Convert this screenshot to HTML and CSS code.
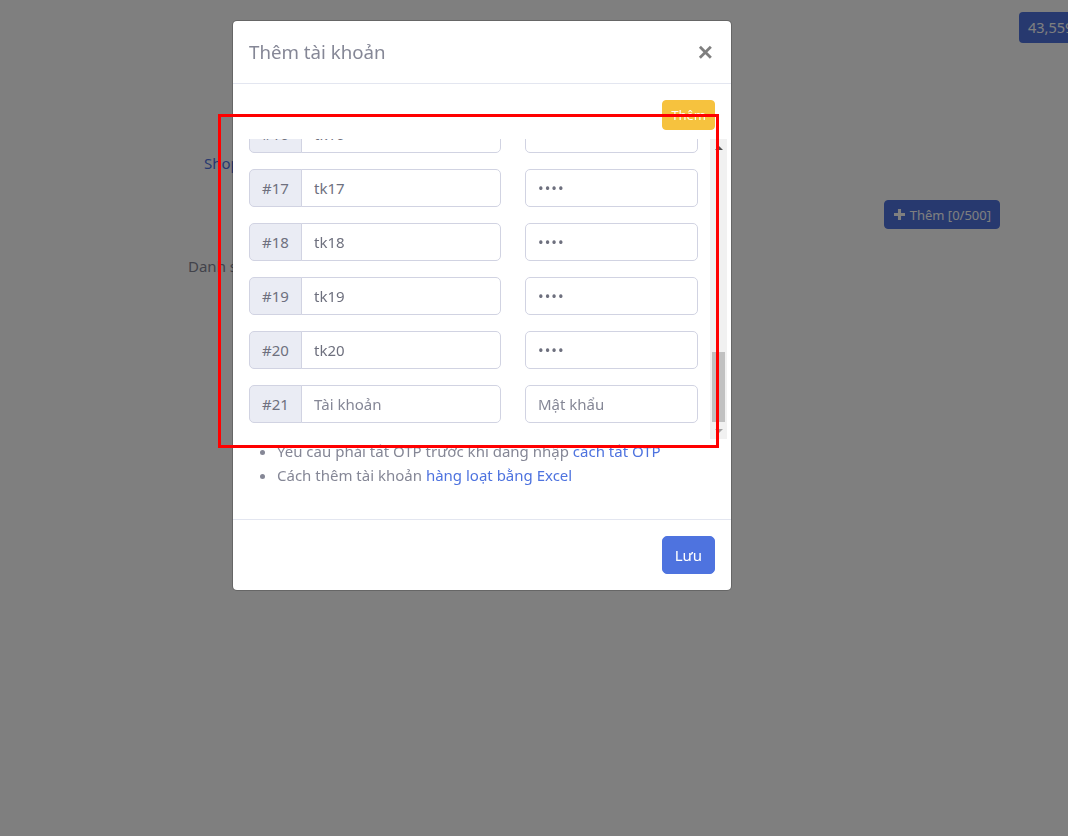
FILE: index.html
```html
<!DOCTYPE html>
<html lang="vi">
<head>
<meta charset="utf-8">
<title>Thêm tài khoản</title>
<link rel="stylesheet" href="styles.css">
</head>
<body>
<div class="page">
  <div class="topbar"><span class="balance">43,559đ</span></div>
  <div class="shop-title">Shop của bạn</div>
  <div class="actions">
    <button class="btn-add"><svg class="plus" viewBox="0 0 10 10" width="11" height="11"><path d="M3.6 0h2.8v3.6H10v2.8H6.4V10H3.6V6.4H0V3.6h3.6z" fill="currentColor"/></svg>Thêm [0/500]</button>
  </div>
  <div class="list-title">Danh sách tài khoản</div>
</div>

<div class="backdrop"></div>

<div class="modal">
  <div class="modal-dialog">
    <div class="modal-header">
      <h5 class="modal-title">Thêm tài khoản</h5>
      <button class="close" type="button">×</button>
    </div>
    <div class="modal-body">
      <div class="toolbar"><button class="btn-warning" type="button">Thêm</button></div>
      <div class="scroll-wrap">
        <div class="rows">
          <div class="acc-row"><div class="ig"><span class="prepend">#1</span><input class="ig-input" value="tk1"></div><input class="pw" type="password" value="1234"></div>
          <div class="acc-row"><div class="ig"><span class="prepend">#2</span><input class="ig-input" value="tk2"></div><input class="pw" type="password" value="1234"></div>
          <div class="acc-row"><div class="ig"><span class="prepend">#3</span><input class="ig-input" value="tk3"></div><input class="pw" type="password" value="1234"></div>
          <div class="acc-row"><div class="ig"><span class="prepend">#4</span><input class="ig-input" value="tk4"></div><input class="pw" type="password" value="1234"></div>
          <div class="acc-row"><div class="ig"><span class="prepend">#5</span><input class="ig-input" value="tk5"></div><input class="pw" type="password" value="1234"></div>
          <div class="acc-row"><div class="ig"><span class="prepend">#6</span><input class="ig-input" value="tk6"></div><input class="pw" type="password" value="1234"></div>
          <div class="acc-row"><div class="ig"><span class="prepend">#7</span><input class="ig-input" value="tk7"></div><input class="pw" type="password" value="1234"></div>
          <div class="acc-row"><div class="ig"><span class="prepend">#8</span><input class="ig-input" value="tk8"></div><input class="pw" type="password" value="1234"></div>
          <div class="acc-row"><div class="ig"><span class="prepend">#9</span><input class="ig-input" value="tk9"></div><input class="pw" type="password" value="1234"></div>
          <div class="acc-row"><div class="ig"><span class="prepend">#10</span><input class="ig-input" value="tk10"></div><input class="pw" type="password" value="1234"></div>
          <div class="acc-row"><div class="ig"><span class="prepend">#11</span><input class="ig-input" value="tk11"></div><input class="pw" type="password" value="1234"></div>
          <div class="acc-row"><div class="ig"><span class="prepend">#12</span><input class="ig-input" value="tk12"></div><input class="pw" type="password" value="1234"></div>
          <div class="acc-row"><div class="ig"><span class="prepend">#13</span><input class="ig-input" value="tk13"></div><input class="pw" type="password" value="1234"></div>
          <div class="acc-row"><div class="ig"><span class="prepend">#14</span><input class="ig-input" value="tk14"></div><input class="pw" type="password" value="1234"></div>
          <div class="acc-row"><div class="ig"><span class="prepend">#15</span><input class="ig-input" value="tk15"></div><input class="pw" type="password" value="1234"></div>
          <div class="acc-row"><div class="ig"><span class="prepend">#16</span><input class="ig-input" value="tk16"></div><input class="pw" type="password" value="1234"></div>
          <div class="acc-row"><div class="ig"><span class="prepend">#17</span><input class="ig-input" value="tk17"></div><input class="pw" type="password" value="1234"></div>
          <div class="acc-row"><div class="ig"><span class="prepend">#18</span><input class="ig-input" value="tk18"></div><input class="pw" type="password" value="1234"></div>
          <div class="acc-row"><div class="ig"><span class="prepend">#19</span><input class="ig-input" value="tk19"></div><input class="pw" type="password" value="1234"></div>
          <div class="acc-row"><div class="ig"><span class="prepend">#20</span><input class="ig-input" value="tk20"></div><input class="pw" type="password" value="1234"></div>
          <div class="acc-row"><div class="ig"><span class="prepend">#21</span><input class="ig-input" placeholder="Tài khoản"></div><input class="pw" type="password" placeholder="Mật khẩu"></div>
        </div>
        <div class="scrollbar">
          <div class="sb-btn"><span class="tri-up"></span></div>
          <div class="sb-track"><div class="sb-thumb"></div></div>
          <div class="sb-btn"><span class="tri-down"></span></div>
        </div>
      </div>
      <ul class="notes">
        <li>Yêu cầu phải tắt OTP trước khi đăng nhập <a href="#">cách tắt OTP</a></li>
        <li>Cách thêm tài khoản <a href="#">hàng loạt bằng Excel</a></li>
      </ul>
    </div>
    <div class="modal-footer">
      <button class="btn-primary" type="button">Lưu</button>
    </div>
  </div>
</div>

<div class="annotation"></div>
</body>
</html>
```

FILE: styles.css
```css
* { box-sizing: border-box; }

html, body {
  margin: 0;
  height: 100%;
}

body {
  background: #ffffff;
  font-family: "Noto Sans", "Open Sans", sans-serif;
  font-size: 15px;
  line-height: 24px;
  color: #858796;
  overflow: hidden;
}

/* ---------- page behind the modal ---------- */
.page {
  padding-top: 12px;
}

.topbar {
  display: flex;
  justify-content: flex-end;
  margin-right: -40px;
}

.balance {
  background: #4e73df;
  color: #ffffff;
  border-radius: 4px;
  padding: 3px 9px 4px;
  font-size: 14.5px;
  line-height: 24px;
  width: 89px;
  white-space: nowrap;
  overflow: hidden;
}

.shop-title {
  margin-top: 108px;
  padding-left: 204px;
  color: #4e73df;
}

.actions {
  display: flex;
  justify-content: flex-end;
  padding-right: 68px;
  margin-top: 25px;
}

.btn-add {
  display: flex;
  align-items: center;
  gap: 5px;
  height: 29px;
  padding: 0 8px 0 9px;
  background: #4e73df;
  border: 1px solid #4e73df;
  border-radius: 4px;
  color: #ffffff;
  font-family: inherit;
  font-size: 13px;
}

.list-title {
  margin-top: 25px;
  padding-left: 188px;
  color: #858796;
}

/* ---------- modal ---------- */
.backdrop {
  position: fixed;
  inset: 0;
  background: rgba(0, 0, 0, 0.5);
}

.modal {
  position: fixed;
  inset: 0;
}

.modal-dialog {
  width: 500px;
  margin: 20px 0 0 232px;
  background: #ffffff;
  border: 1px solid rgba(0, 0, 0, 0.2);
  border-radius: 5px;
  background-clip: padding-box;
}

.modal-header {
  display: flex;
  align-items: flex-start;
  padding: 16px;
  border-bottom: 1px solid #e3e6f0;
}

.modal-title {
  margin: 0;
  font-size: 18.7px;
  line-height: 30px;
  font-weight: 400;
  color: #858796;
}

.close {
  margin: -16px -16px -16px auto;
  padding: 16px 18px 16px 16px;
  background: none;
  border: 0;
  font-family: "Liberation Sans", sans-serif;
  font-size: 26px;
  font-weight: 700;
  line-height: 30px;
  color: #000000;
  opacity: 0.5;
}

.modal-body {
  padding: 16px;
}

.toolbar {
  display: flex;
  justify-content: flex-end;
  margin-bottom: 9px;
}

.btn-warning {
  background: #f6c23e;
  border: 1px solid #f6c23e;
  border-radius: 4px;
  color: #ffffff;
  font-family: inherit;
  font-size: 13px;
  line-height: 20px;
  padding: 4px 8px;
}

.scroll-wrap {
  display: flex;
  height: 300px;
  margin-right: -12px;
}

.rows {
  flex: 1;
  display: flex;
  flex-direction: column;
  justify-content: flex-end;
  overflow: hidden;
}

.acc-row {
  flex-shrink: 0;
  display: grid;
  grid-template-columns: 252px 173px;
  column-gap: 24px;
  margin-bottom: 16px;
}

.ig {
  display: flex;
  height: 38px;
}

.prepend {
  width: 53px;
  flex-shrink: 0;
  padding: 6px 0 6px 12px;
  background: #eaecf4;
  border: 1px solid #d1d3e2;
  border-radius: 5px 0 0 5px;
  color: #6e707e;
  font-size: 15px;
  line-height: 24px;
}

.ig-input,
.pw {
  height: 38px;
  padding: 6px 12px;
  border: 1px solid #d1d3e2;
  font-family: inherit;
  font-size: 15px;
  line-height: 24px;
  color: #6e707e;
  background: #ffffff;
  outline: none;
}

.ig-input {
  flex: 1;
  min-width: 0;
  margin-left: -1px;
  border-radius: 0 5px 5px 0;
}

.pw {
  width: 173px;
  border-radius: 5px;
  letter-spacing: 1px;
}

.ig-input::placeholder,
.pw::placeholder {
  color: #858796;
  letter-spacing: 0;
}

/* fake scrollbar */
.scrollbar {
  width: 17px;
  flex-shrink: 0;
  display: flex;
  flex-direction: column;
  background: #f1f1f1;
}

.sb-btn {
  height: 17px;
  display: flex;
  align-items: center;
  justify-content: center;
}

.tri-up {
  width: 0;
  height: 0;
  border-left: 4px solid transparent;
  border-right: 4px solid transparent;
  border-bottom: 4px solid #505050;
}

.tri-down {
  width: 0;
  height: 0;
  border-left: 4px solid transparent;
  border-right: 4px solid transparent;
  border-top: 4px solid #a3a3a3;
}

.sb-track {
  flex: 1;
  display: flex;
  flex-direction: column;
  justify-content: flex-end;
}

.sb-thumb {
  height: 70px;
  margin: 0 2px;
  background: #c1c1c1;
}

.notes {
  margin: 0 0 16px;
  padding-left: 28px;
  color: #858796;
}

.notes a {
  color: #4e73df;
  text-decoration: none;
}

.modal-footer {
  display: flex;
  justify-content: flex-end;
  padding: 12px;
  border-top: 1px solid #e3e6f0;
}

.btn-primary {
  margin: 4px;
  padding: 6px 12px;
  background: #4e73df;
  border: 1px solid #4e73df;
  border-radius: 5px;
  color: #ffffff;
  font-family: inherit;
  font-size: 15px;
  line-height: 24px;
}

/* red annotation frame */
.annotation {
  position: fixed;
  left: 218px;
  top: 114px;
  width: 501px;
  height: 334px;
  border: 3px solid #ff0000;
  pointer-events: none;
}
```
